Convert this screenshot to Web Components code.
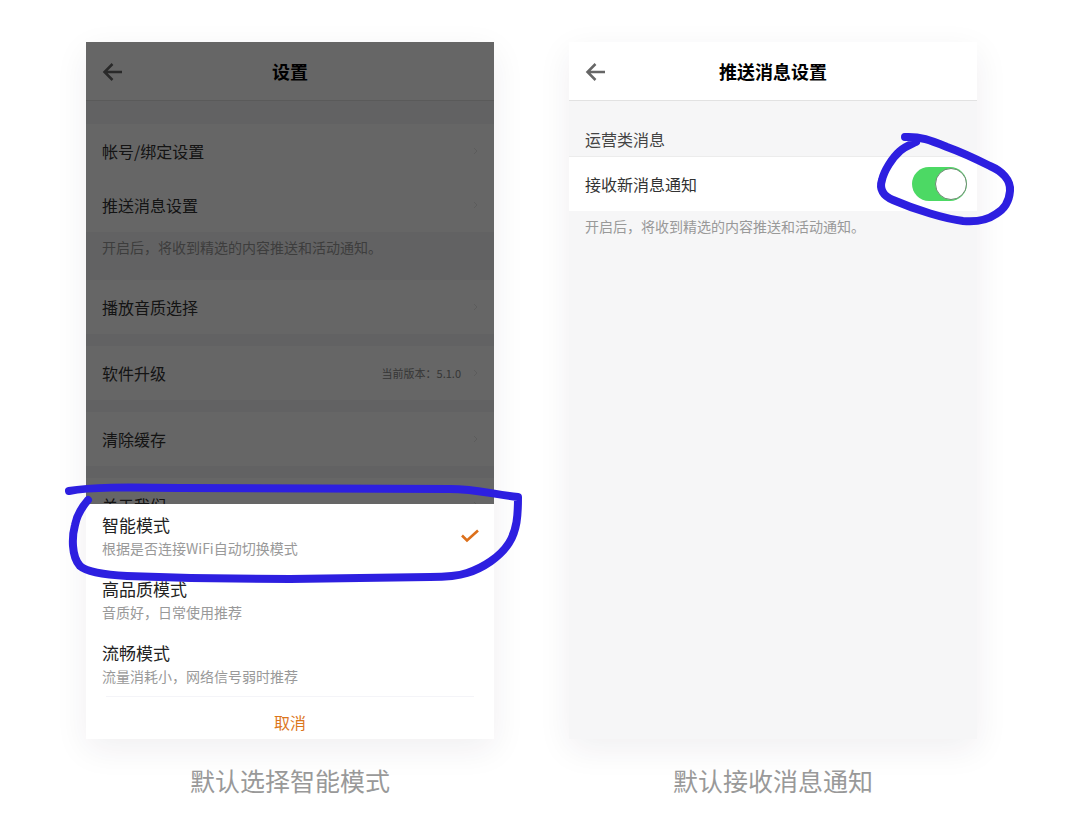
<!DOCTYPE html>
<html lang="zh-CN">
<head>
<meta charset="utf-8">
<meta name="viewport" content="width=device-width, initial-scale=1">
<title>设置</title>
<style>
  body {
    margin: 0;
    background: #fff;
    font-family: "Noto Sans CJK SC", "Noto Sans", sans-serif;
    color: #333;
  }
</style>
</head>
<body>
<showcase-board>
  <phone-frame caption="默认选择智能模式">
    <app-bar heading="设置"></app-bar>
    <settings-group class="first">
      <settings-row label="帐号/绑定设置"></settings-row>
      <settings-row label="推送消息设置"></settings-row>
    </settings-group>
    <hint-text>开启后，将收到精选的内容推送和活动通知。</hint-text>
    <settings-group><settings-row label="播放音质选择"></settings-row></settings-group>
    <settings-group><settings-row label="软件升级">当前版本：5.1.0</settings-row></settings-group>
    <settings-group><settings-row label="清除缓存"></settings-row></settings-group>
    <settings-group><settings-row label="关于我们"></settings-row></settings-group>
    <mode-sheet slot="overlay"></mode-sheet>
    <ink-mark slot="ink" box="86 42 408 697" path="M69 491C90 487 125 487 180 488C250 489 320 489 450 489C475 489 492 494 518 497C518 516 517 530 509 543C500 557 483 568 467 573C455 577 440 577 430 577C380 578 330 578 290 579C230 579 180 578 127 576C108 575 88 573 80 566C71 556 72 536 75 525C77 514 82 507 88 500"></ink-mark>
  </phone-frame>
  <phone-frame caption="默认接收消息通知">
    <app-bar heading="推送消息设置"></app-bar>
    <section-label>运营类消息</section-label>
    <toggle-row label="接收新消息通知"></toggle-row>
    <hint-text>开启后，将收到精选的内容推送和活动通知。</hint-text>
    <ink-mark slot="ink" box="569 42 408 697" path="M905 137C920 136 932 141 947 147C961 152 976 159 990 166C1002 171 1011 180 1010 191C1009 203 1003 210 996 214C986 221 974 222 963 221C946 219 916 210 893 200C883 196 879 189 882 180C884 171 892 158 900 151C906 146 912 144 916 142"></ink-mark>
  </phone-frame>
</showcase-board>

<script>
  // Shared base: clones the class's markup into an open shadow root.
  class View extends HTMLElement {
    connectedCallback() {
      if (this.shadowRoot) return;
      const t = document.createElement('template');
      t.innerHTML = this.view();
      this.attachShadow({ mode: 'open' }).append(t.content.cloneNode(true));
    }
    attr(name) { return this.getAttribute(name) || ''; }
  }

  customElements.define('showcase-board', class extends View {
    view() { return `
      <style>
        :host { display: block; }
        main { display: grid; grid-template-columns: 1fr 1fr; gap: 75px; padding: 42px 103px 24px 86px; }
      </style>
      <main><slot></slot></main>`; }
  });

  customElements.define('phone-frame', class extends View {
    view() { return `
      <style>
        :host { display: block; min-width: 0; }
        figure { margin: 0; position: relative; }
        .screen {
          position: relative; aspect-ratio: 408 / 697; overflow: hidden;
          background: #f6f6f7;
        }
        .shade { box-shadow: 0 10px 32px rgba(40, 30, 60, .07); }
        figcaption { margin-top: 23px; font-size: 25px; line-height: 36px; text-align: center; color: #999; }
      </style>
      <figure>
        <div class="shade"><div class="screen"><slot></slot><slot name="overlay"></slot></div></div>
        <figcaption>${this.attr('caption')}</figcaption>
        <slot name="ink"></slot>
      </figure>`; }
  });

  customElements.define('app-bar', class extends View {
    view() { return `
      <style>
        :host { display: block; background: #fff; border-bottom: 1px solid #e2e2e2; }
        header { display: grid; grid-template-columns: 24px 1fr 24px; align-items: center; height: 58px; padding: 0 16px; }
        button { display: flex; padding: 0; border: 0; background: none; color: #666; }
        h1 { margin: 0; font-size: 18px; line-height: 28px; font-weight: 700; text-align: center; color: #000; }
      </style>
      <header>
        <button type="button" aria-label="返回">
          <svg width="22" height="20" viewBox="0 0 22 20" fill="none" stroke="currentColor" stroke-width="2.500"><path d="M20 11H3M10.500 3L2.500 11L10.500 19"/></svg>
        </button>
        <h1>${this.attr('heading')}</h1>
      </header>`; }
  });

  customElements.define('settings-group', class extends View {
    view() { return `
      <style>
        :host { display: block; margin-bottom: 12px; background: #fff; }
        :host(.first) { margin: 23px 0 0; }
      </style>
      <slot></slot>`; }
  });

  customElements.define('settings-row', class extends View {
    view() { return `
      <style>
        :host { display: block; }
        button {
          display: flex; align-items: center; width: 100%; height: 54px; padding: 0 16px;
          border: 0; background: none; font: inherit; font-size: 16px; color: #333; text-align: left;
        }
        .label { flex: 1; }
        .value { font-size: 11px; color: #888; margin-right: 12px; }
        svg { color: #e6e6e6; }
      </style>
      <button type="button">
        <span class="label">${this.attr('label')}</span>
        <span class="value"><slot></slot></span>
        <svg width="5" height="8" viewBox="0 0 5 8" fill="none" stroke="currentColor"><path d="M1 1L4 4L1 7"/></svg>
      </button>`; }
  });

  customElements.define('hint-text', class extends View {
    view() { return `
      <style>
        :host { display: block; padding: 3px 16px 21px; font-size: 14px; line-height: 24px; color: #999; }
      </style>
      <slot></slot>`; }
  });

  customElements.define('section-label', class extends View {
    view() { return `
      <style>
        :host { display: block; padding: 26px 16px 5px; border-bottom: 1px solid #ececec; font-size: 16px; line-height: 24px; color: #444; }
      </style>
      <slot></slot>`; }
  });

  customElements.define('toggle-row', class extends View {
    view() { return `
      <style>
        :host { display: block; background: #fff; }
        label { display: flex; align-items: center; justify-content: space-between; height: 54px; padding: 0 10px 0 16px; font-size: 16px; color: #333; }
        input {
          appearance: none; display: flex; align-items: center; box-sizing: border-box;
          width: 55px; height: 34px; margin: 0; border-radius: 17px; background: #ddd;
        }
        input::before { content: ""; box-sizing: border-box; width: 32px; height: 32px; border: 1px solid #6b8a70; border-radius: 50%; background: #fff; }
        input:checked { justify-content: flex-end; background: #4cd964; }
      </style>
      <label>${this.attr('label')}<input type="checkbox" role="switch" checked></label>`; }
  });

  customElements.define('mode-sheet', class extends View {
    view() {
      const modes = [
        ['智能模式', '根据是否连接WiFi自动切换模式'],
        ['高品质模式', '音质好，日常使用推荐'],
        ['流畅模式', '流量消耗小，网络信号弱时推荐'],
      ];
      return `
      <style>
        :host { position: absolute; inset: 0; display: flex; flex-direction: column; justify-content: flex-end; background: rgba(0, 0, 0, .6); }
        form { background: #fff; }
        label { display: flex; align-items: center; height: 64px; padding: 0 15px 0 16px; box-sizing: border-box; }
        .text { flex: 1; display: grid; }
        .name { font-size: 17px; line-height: 24px; color: #222; }
        .note { font-size: 14px; line-height: 22px; color: #999; }
        input { appearance: none; width: 0; height: 0; margin: 0; }
        svg { visibility: hidden; color: #dc701b; }
        input:checked + svg { visibility: visible; }
        footer { margin: 0 20px; border-top: 1px solid #f4f4f8; }
        button { width: 100%; height: 42px; padding: 8px 0 0; border: 0; background: none; font: inherit; font-size: 16px; line-height: 24px; color: #dc761c; }
      </style>
      <form>
        ${modes.map(([name, note], i) => `
        <label>
          <span class="text"><span class="name">${name}</span><span class="note">${note}</span></span>
          <input type="radio" name="mode" ${i ? '' : 'checked'}>
          <svg width="18" height="14" viewBox="0 0 18 14" fill="none" stroke="currentColor" stroke-width="2.600"><path d="M1 6.500L6 11.500L17 1.500"/></svg>
        </label>`).join('')}
        <footer><button type="button">取消</button></footer>
      </form>`;
    }
  });

  // Hand-drawn loop laid over a screen; it scales with the screen's width.
  customElements.define('ink-mark', class extends View {
    view() { return `
      <style>
        :host { position: absolute; inset: 0 0 auto; pointer-events: none; }
        svg { display: block; width: 100%; overflow: visible; }
      </style>
      <svg viewBox="${this.attr('box')}" fill="none" stroke="#2d1fe0" stroke-width="8" stroke-linecap="round" stroke-linejoin="round" aria-hidden="true"><path d="${this.attr('path')}"/></svg>`; }
  });
</script>
</body>
</html>
